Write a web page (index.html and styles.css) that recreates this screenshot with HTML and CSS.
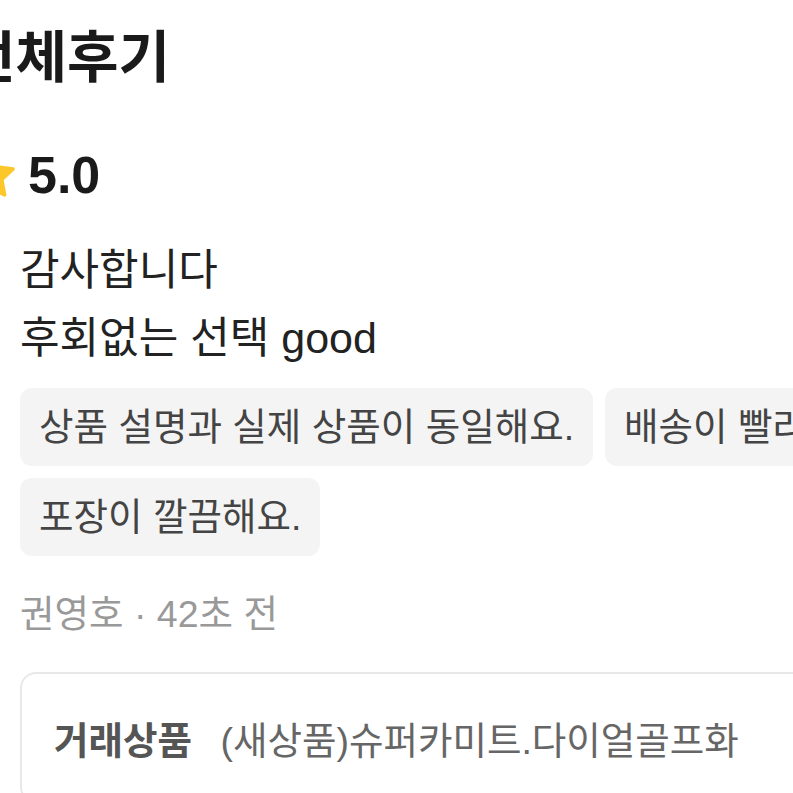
FILE: index.html
```html
<!DOCTYPE html>
<html lang="ko">
<head>
  <meta charset="UTF-8">
  <meta name="viewport" content="width=device-width, initial-scale=1.0">
  <title>전체후기</title>
  <link rel="stylesheet" href="styles.css">
</head>
<body>

  <div class="page">
    <h1 class="title">전체후기</h1>

    <div class="rating">
      <svg class="star" viewBox="0 0 24 24" width="52" height="52">
        <path d="M12 1.8l3.1 6.5 7.1.9-5.2 4.9 1.3 7.1L12 17.8l-6.3 3.4 1.3-7.1L1.8 9.2l7.1-.9z" fill="#fcc72a" stroke="#fcc72a" stroke-width="1.6" stroke-linejoin="round"/>
      </svg>
      <span class="score">5.0</span>
    </div>

    <p class="comment">감사합니다<br>후회없는 선택 good</p>

    <div class="chips">
      <span class="chip">상품 설명과 실제 상품이 동일해요.</span>
      <span class="chip">배송이 빨라요.</span>
      <span class="chip">포장이 깔끔해요.</span>
    </div>

    <div class="meta">권영호 · 42초 전</div>

    <div class="product-card">
      <span class="label">거래상품</span>
      <span class="product-name">(새상품)슈퍼카미트.다이얼골프화</span>
    </div>
  </div>

</body>
</html>
```

FILE: styles.css
```css
body {
  font-family: 'Liberation Sans', 'Noto Sans CJK KR', sans-serif;
  margin: 0;
  padding: 0;
  background-color: #fff;
  color: #1a1a1a;
  overflow: hidden;
}
.page {
  padding: 0 20px;
  width: 1000px;
}
.title {
  font-size: 56px;
  font-weight: bold;
  line-height: 62px;
  margin: 27px 0 0 -56px;
  color: #1a1a1a;
}
.rating {
  display: flex;
  align-items: center;
  gap: 11px;
  margin: 61px 0 0 -55px;
  height: 50px;
}
.star {
  display: block;
}
.score {
  font-size: 52px;
  font-weight: bold;
  line-height: 50px;
}
.comment {
  font-size: 43px;
  line-height: 68px;
  margin: 36px 0 0;
  color: #222;
}
.chips {
  display: flex;
  flex-wrap: wrap;
  gap: 12px;
  width: 900px;
  margin-top: 16px;
}
.chip {
  background-color: #f4f4f4;
  border-radius: 12px;
  padding: 0 19px;
  height: 78px;
  line-height: 78px;
  font-size: 37.5px;
  color: #444;
  white-space: nowrap;
}
.meta {
  font-size: 37.5px;
  color: #999;
  margin-top: 33px;
  line-height: 50px;
}
.product-card {
  width: 900px;
  margin-top: 33px;
  border: 2px solid #e8e8e8;
  border-radius: 16px;
  padding: 36px 32px;
  font-size: 37.5px;
  white-space: nowrap;
}
.label {
  font-weight: bold;
  color: #555;
  margin-right: 18px;
}
.product-name {
  color: #666;
}
```
